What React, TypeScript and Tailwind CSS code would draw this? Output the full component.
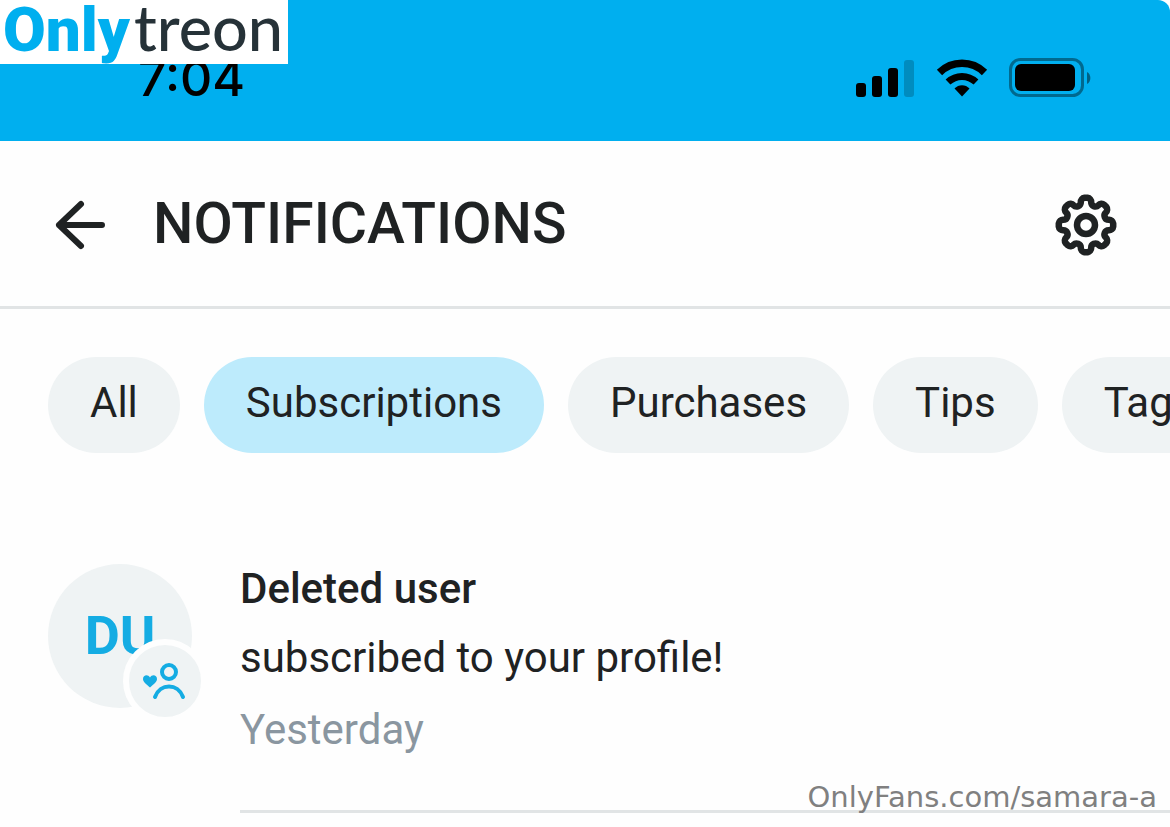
import React, { useState } from 'react';

const filters = ['All', 'Subscriptions', 'Purchases', 'Tips', 'Tags'];

const notifications = [
  { id: 'n1', initials: 'DU', name: 'Deleted user', text: 'subscribed to your profile!', time: 'Yesterday' },
];

// Eight blunt teeth joined by round notches, centred on 0,0
const gearPath = () => {
  const at = (x: number, y: number, turn: number) => {
    const a = (turn * Math.PI) / 4;
    return `${(x * Math.cos(a) - y * Math.sin(a)).toFixed(2)} ${(x * Math.sin(a) + y * Math.cos(a)).toFixed(2)}`;
  };
  let d = `M${at(-5.2, -22.8, 0)}`;
  for (let i = 0; i < 8; i++) {
    d += `A4.2 4.2 0 0 1 ${at(-1.5, -27.2, i)}L${at(1.5, -27.2, i)}`;
    d += `A4.2 4.2 0 0 1 ${at(5.2, -22.8, i)}A4.2 4.2 0 0 0 ${at(-5.2, -22.8, i + 1)}`;
  }
  return d + 'Z';
};

const StatusIcons: React.FC = () => (
  <div className="flex items-center">
    <svg width="58" height="38" viewBox="0 0 58 38" aria-hidden="true">
      <rect x="0" y="24" width="10" height="14" rx="3" />
      <rect x="16" y="17" width="10" height="21" rx="3" />
      <rect x="32" y="9" width="10" height="29" rx="3" />
      <rect x="48" y="1" width="10" height="37" rx="3" opacity="0.2" />
    </svg>
    <svg className="ml-[22px]" width="52" height="38" viewBox="0 0 52 38" fill="none" stroke="#000" aria-hidden="true">
      <path d="M3.5 13.5C16 1.2 36 1.2 48.5 13.5" strokeWidth="7.5" />
      <path d="M12 23C20 15.5 32 15.5 40 23" strokeWidth="7" />
      <path d="M18.5 29.5C22.5 25 29.5 25 33.5 29.5L26 37.5Z" fill="#000" stroke="none" />
    </svg>
    <svg className="ml-[21px]" width="83" height="40" viewBox="0 0 83 40" aria-hidden="true">
      <rect x="1.5" y="1.5" width="72" height="36" rx="10" fill="none" stroke="#000" strokeWidth="3" opacity="0.4" />
      <rect x="6" y="6" width="60" height="27" rx="6" />
      <path d="M78 14C82.5 16 82.5 24 78 26Z" opacity="0.45" />
    </svg>
  </div>
);

export default function App() {
  const [active, setActive] = useState('Subscriptions');

  return (
    <div className="relative min-h-screen overflow-hidden bg-[#fefefe] font-['Roboto','Liberation_Sans',sans-serif] text-[#1f2223]">
      <div className="flex h-[141px] items-center justify-between rounded-tr-xl bg-[#00afef] pl-[138px] pr-[78px] pt-[14px] text-black">
        <span className="font-['Inter',sans-serif] text-[50px] font-medium leading-none">7:04</span>
        <StatusIcons />
      </div>

      <header className="flex h-[168px] items-center border-b-3 border-[#e1e4e5] pl-[54px] pr-[52px] pt-[2px]">
        <button type="button" aria-label="Back">
          <svg width="54" height="54" viewBox="0 0 54 54" fill="none" stroke="currentColor" strokeWidth="6" strokeLinecap="round" strokeLinejoin="round" aria-hidden="true">
            <path d="M48 27H5M27 6L5 27L27 48" />
          </svg>
        </button>
        <h1 className="ml-[45px] flex-1 pb-0.5 text-[57px] font-medium leading-none">NOTIFICATIONS</h1>
        <button type="button" aria-label="Settings">
          <svg width="64" height="64" viewBox="-32 -32 64 64" fill="none" stroke="currentColor" strokeWidth="6.5" strokeLinejoin="round" aria-hidden="true">
            <path d={gearPath()} />
            <circle r="9" />
          </svg>
        </button>
      </header>

      <nav className="flex gap-6 overflow-hidden px-12 pt-12">
        {filters.map((filter) => (
          <button
            key={filter}
            type="button"
            onClick={() => setActive(filter)}
            className={`h-24 shrink-0 rounded-full px-[42px] pb-1 text-[42px] leading-none ${filter === active ? 'bg-[#bdebfc]' : 'bg-[#eff3f4]'}`}
          >
            {filter}
          </button>
        ))}
      </nav>

      <main className="pl-12 pt-[102px]">
        {notifications.map((item) => (
          <article key={item.id} className="flex gap-12">
            <div className="relative mt-[9px] flex h-36 w-36 shrink-0 items-center justify-center rounded-full bg-[#eff3f4] text-[54px] font-bold leading-none text-[#14ace3]">
              <span>{item.initials}</span>
              <div className="absolute -bottom-[15px] -right-[15px] flex h-[84px] w-[84px] items-center justify-center rounded-full border-6 border-[#fefefe] bg-[#eff3f4]">
                <svg width="44" height="40" viewBox="0 0 44 40" fill="none" stroke="currentColor" strokeWidth="4" strokeLinecap="round" aria-hidden="true">
                  <circle cx="26" cy="11" r="7" />
                  <path d="M12 36C17 22 35 22 40 36" />
                  <path d="M7 26.5C3 23 0 21 0 18C0 14 5 13 7 16.5C9 13 14 14 14 18C14 21 11 23 7 26.5Z" fill="currentColor" stroke="none" />
                </svg>
              </div>
            </div>
            <div className="flex-1 border-b-3 border-[#e1e4e5] pb-[45px] text-[42px]">
              <h2 className="font-medium leading-[68px]">{item.name}</h2>
              <p className="leading-[70px]">{item.text}</p>
              <time className="block pt-0.5 leading-[70px] text-[#8a96a0]">{item.time}</time>
            </div>
          </article>
        ))}
      </main>

      <div className="absolute left-0 top-0 flex h-16 w-72 items-baseline bg-white pl-[3px] leading-[54px]">
        <span className="text-[62px] font-black text-[#00afef]">Only</span>
        <span className="ml-1 font-['Lato',sans-serif] text-[63px] font-medium text-[#263238]">treon</span>
      </div>
      <a href="#profile" className="absolute bottom-[12px] right-[13px] font-['DejaVu_Sans',sans-serif] text-[29px] leading-9 text-[#808080]">
        OnlyFans.com/samara-a
      </a>
    </div>
  );
}
